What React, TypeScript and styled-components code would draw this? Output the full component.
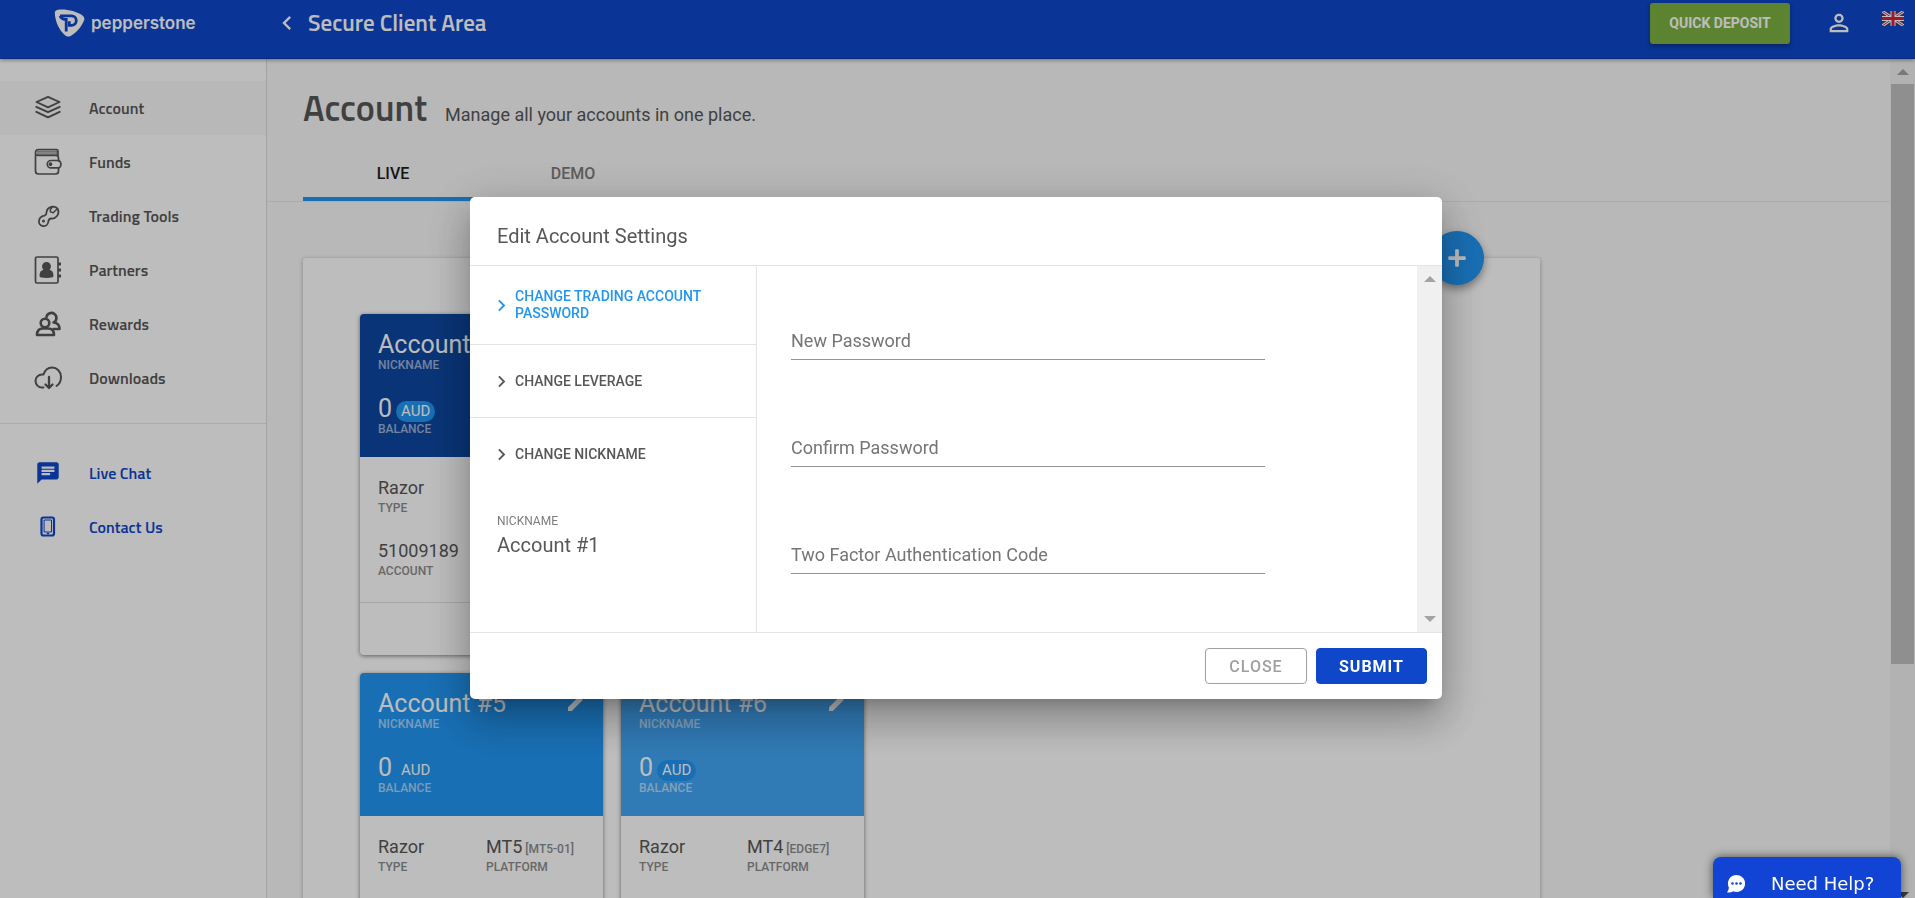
import React from "react";
import styled, { createGlobalStyle, css } from "styled-components";
import { MdChat, MdChevronLeft, MdChevronRight, MdEdit, MdPersonOutline } from "react-icons/md";
import { FaPlus } from "react-icons/fa";

const headingFont = `"Titillium Web", Roboto, sans-serif`;

const GlobalStyle = createGlobalStyle`
  *, *::before, *::after { box-sizing: border-box; }
  body { margin: 0; font-family: Roboto, sans-serif; color: #575757; background: #f8f8f8; }
  button, input { font-family: inherit; }
  button { cursor: pointer; }
  h1, h2, p, ul, dl, dd, dt { margin: 0; padding: 0; }
`;

/* Page shell */

const Shell = styled.div`
  display: flex;
  flex-direction: column;
  height: 100vh;
  overflow: hidden;
`;

const TopBar = styled.header`
  position: relative;
  z-index: 1;
  display: flex;
  align-items: center;
  flex-shrink: 0;
  height: 59px;
  padding-bottom: 12px;
  background: #0e47c9;
  border-bottom: 1px solid #0c3ba6;
  box-shadow: 0 1px 4px rgba(0, 0, 0, 0.4);
  color: #fff;
`;

const Brand = styled.a`
  display: flex;
  align-items: center;
  gap: 6px;
  flex-shrink: 0;
  width: 267px;
  padding-left: 54px;
  color: inherit;
  font: 600 17px/24px Inter, sans-serif;
  text-decoration: none;
`;

const IconButton = styled.button`
  display: flex;
  padding: 0;
  border: 0;
  background: none;
  color: inherit;
`;

const AreaTitle = styled.div`
  display: flex;
  flex: 1;
  align-items: center;
  gap: 7px;
  padding-left: 6px;
  font: 600 23px/28px ${headingFont};
`;

const TopActions = styled.div`
  display: flex;
  align-items: center;
  padding-right: 11px;
`;

const DepositButton = styled.button`
  width: 140px;
  height: 41px;
  margin-right: 35px;
  border: 0;
  border-radius: 3px;
  background: #7cb342;
  box-shadow: 0 2px 4px rgba(0, 0, 0, 0.35);
  color: #fff;
  font-size: 14px;
  font-weight: 700;
`;

const FlagButton = styled(IconButton)`
  margin-left: 29px;
  padding-bottom: 10px;
`;

const Body = styled.div`
  display: flex;
  flex: 1;
  min-height: 0;
`;

/* Side navigation */

const SideNav = styled.nav`
  flex-shrink: 0;
  width: 267px;
  padding-top: 22px;
  border-right: 1px solid #dedede;
  background: #fff;
`;

const NavList = styled.ul`
  list-style: none;

  & + & {
    margin-top: 18px;
    padding-top: 22px;
    border-top: 1px solid #e6e6e6;
  }
`;

const NavLink = styled.a<{ $active?: boolean; $accent?: boolean }>`
  display: flex;
  align-items: center;
  gap: 26px;
  height: 54px;
  padding-left: 33px;
  background: ${(p) => (p.$active ? "#f8f8f8" : "transparent")};
  color: ${(p) => (p.$accent ? "#0e47c9" : "#575757")};
  font: 600 16px/20px ${headingFont};
  text-decoration: none;

  svg {
    flex-shrink: 0;
    width: 30px;
    height: 30px;
  }
`;

/* Main content */

const Main = styled.main`
  flex: 1;
  min-width: 0;
  overflow: hidden;
`;

const PageHead = styled.div`
  display: flex;
  align-items: baseline;
  gap: 18px;
  padding: 28px 36px 0;
`;

const PageTitle = styled.h1`
  font: 600 36px/42px ${headingFont};
`;

const PageIntro = styled.p`
  font-size: 18px;
  line-height: 24px;
`;

const Tabs = styled.div`
  display: flex;
  margin-top: 17px;
  padding-left: 36px;
  border-bottom: 1px solid #e8e8e8;
`;

const Tab = styled.button<{ $active?: boolean }>`
  width: 180px;
  height: 55px;
  padding: 4px 0 0;
  border: 0;
  border-bottom: 4px solid ${(p) => (p.$active ? "#2196f3" : "transparent")};
  background: none;
  color: ${(p) => (p.$active ? "#1c1c1c" : "#7d7d7d")};
  font-size: 16px;
  font-weight: 500;
`;

const Panel = styled.section`
  position: relative;
  width: 78%;
  max-width: 1237px;
  min-height: 900px;
  margin: 56px 0 0 36px;
  padding: 56px 57px;
  border-radius: 3px;
  background: #fff;
  box-shadow: 0 1px 4px rgba(0, 0, 0, 0.3);
`;

const AddButton = styled.button`
  position: absolute;
  top: -27px;
  right: 56px;
  display: flex;
  align-items: center;
  justify-content: center;
  width: 54px;
  height: 54px;
  border: 0;
  border-radius: 50%;
  background: #2196f3;
  box-shadow: 0 4px 8px rgba(0, 0, 0, 0.4);
  color: #fff;
`;

const CardRow = styled.div`
  display: flex;
  gap: 18px;

  & + & {
    margin-top: 18px;
  }
`;

const Card = styled.article`
  width: 243px;
  border-radius: 4px;
  background: #fff;
  box-shadow: 0 1px 4px rgba(0, 0, 0, 0.5);
`;

const CardHead = styled.div<{ $color: string }>`
  display: flex;
  align-items: flex-start;
  justify-content: space-between;
  height: 143px;
  padding: 17px 14px 16px 18px;
  border-radius: 4px 4px 0 0;
  background: ${(p) => p.$color};
  color: #fff;
`;

const CardBody = styled.dl`
  display: grid;
  grid-template-columns: 108px 1fr;
  align-content: start;
  row-gap: 23px;
  height: 145px;
  padding: 19px 18px;
`;

const CardFoot = styled.div`
  height: 53px;
  border-top: 1px solid #e0e0e0;
`;

const Pair = styled.div<{ $wide?: boolean }>`
  display: flex;
  flex-direction: column-reverse;
  justify-content: flex-end;
  grid-column: ${(p) => (p.$wide ? "1 / -1" : "auto")};
`;

const HeadPair = styled(Pair)`
  & + & {
    margin-top: 23px;
  }
`;

const HeadTerm = styled.dt`
  color: rgba(255, 255, 255, 0.6);
  font-size: 12px;
  font-weight: 500;
  line-height: 14px;
`;

const HeadValue = styled.dd`
  height: 27px;
  font-size: 25px;
  line-height: 27px;
  white-space: nowrap;
`;

const BodyTerm = styled.dt`
  color: #8c8c8c;
  font-size: 12px;
  font-weight: 500;
  line-height: 16px;
`;

const BodyValue = styled.dd`
  height: 24px;
  font-size: 18px;
  line-height: 24px;
  white-space: nowrap;

  small {
    margin-left: 3px;
    color: #8c8c8c;
    font-size: 12px;
    font-weight: 500;
  }
`;

const Currency = styled.span`
  display: inline-block;
  margin-left: 4px;
  padding: 0 5px;
  border-radius: 11px;
  background: #2196f3;
  font-size: 15px;
  line-height: 21px;
  vertical-align: 1px;
`;

/* Scroll bars */

const Track = styled.div<{ $tint: string }>`
  display: flex;
  flex-direction: column;
  flex-shrink: 0;
  align-items: center;
  justify-content: space-between;
  width: 25px;
  padding: 10px 1px;
  background: ${(p) => p.$tint};
`;

const Arrow = styled.span<{ $down?: boolean; $color: string }>`
  border: 6px solid transparent;
  ${(p) =>
    p.$down
      ? css`border-top-color: ${p.$color}; border-bottom-width: 0;`
      : css`border-bottom-color: ${p.$color}; border-top-width: 0;`}
`;

const PageTrack = styled(Track)`
  padding: 10px 1px 0;
`;

const Thumb = styled.div`
  width: 100%;
  height: 70%;
  margin: 9px 0 auto;
  background: #c1c1c1;
`;

/* Dialog */

const Overlay = styled.div`
  position: fixed;
  z-index: 2;
  inset: 0;
  display: flex;
  align-items: center;
  justify-content: center;
  padding: 0 3px 2px 0;
  background: rgba(0, 0, 0, 0.26);
`;

const Dialog = styled.form`
  display: flex;
  flex-direction: column;
  width: 972px;
  max-width: 92%;
  border-radius: 5px;
  background: #fff;
  box-shadow: 0 11px 15px -7px rgba(0, 0, 0, 0.2), 0 24px 38px 3px rgba(0, 0, 0, 0.16),
    0 9px 46px 8px rgba(0, 0, 0, 0.14);
`;

const DialogTitle = styled.h2`
  padding: 24px 27px 14px;
  border-bottom: 1px solid #e4e4e4;
  font-size: 20px;
  font-weight: 400;
  line-height: 30px;
`;

const DialogBody = styled.div`
  display: flex;
  height: 366px;
`;

const Options = styled.div`
  flex-shrink: 0;
  width: 287px;
  border-right: 1px solid #e4e4e4;
`;

const Option = styled.button<{ $active?: boolean }>`
  display: flex;
  align-items: center;
  gap: 2px;
  width: 100%;
  height: ${(p) => (p.$active ? "79px" : "73px")};
  padding: 0 40px 0 20px;
  border: 0;
  border-bottom: 1px solid #e4e4e4;
  background: none;
  color: ${(p) => (p.$active ? "#2196f3" : "#575757")};
  font-size: 14px;
  font-weight: 500;
  line-height: 17px;
  text-align: left;

  &:last-of-type {
    border-bottom: 0;
  }

  svg {
    flex-shrink: 0;
  }
`;

const Summary = styled.dl`
  padding: 21px 27px;

  dt {
    color: #7d7d7d;
    font-size: 12px;
    line-height: 18px;
  }

  dd {
    font-size: 20px;
    line-height: 30px;
  }
`;

const Fields = styled.div`
  display: flex;
  flex: 1;
  flex-direction: column;
  gap: 67px;
  padding: 54px 34px 0;
`;

const FieldBox = styled.div`
  display: grid;
  width: 474px;
  max-width: 100%;
  height: 40px;
  border-bottom: 1px solid #949494;

  label {
    grid-area: 1 / 1;
    align-self: end;
    margin-bottom: 6px;
    color: #757575;
    font-size: 18px;
    line-height: 24px;
  }

  input {
    grid-area: 1 / 1;
    padding: 0;
    border: 0;
    outline: 0;
    background: none;
    font-size: 18px;
  }
`;

const DialogFoot = styled.div`
  display: flex;
  justify-content: flex-end;
  gap: 9px;
  padding: 15px;
  border-top: 1px solid #e4e4e4;
`;

const DialogButton = styled.button<{ $primary?: boolean }>`
  width: ${(p) => (p.$primary ? "111px" : "102px")};
  height: 36px;
  border: 1px solid ${(p) => (p.$primary ? "#0e47c9" : "#a0a0a0")};
  border-radius: 4px;
  background: ${(p) => (p.$primary ? "#0e47c9" : "#fff")};
  color: ${(p) => (p.$primary ? "#fff" : "#a0a0a0")};
  font-size: 16px;
  font-weight: ${(p) => (p.$primary ? 700 : 500)};
  letter-spacing: 1px;
`;

/* Support chat launcher */

const HelpButton = styled.button`
  position: fixed;
  z-index: 3;
  right: 14px;
  bottom: 0;
  display: flex;
  align-items: center;
  gap: 26px;
  width: 188px;
  height: 41px;
  padding: 12px 14px 0;
  border: 0;
  border-radius: 8px 8px 0 0;
  background: #1144d4;
  box-shadow: 0 0 10px rgba(0, 0, 0, 0.6);
  color: #fff;
  font: 18px/24px "DejaVu Sans", sans-serif;
  white-space: nowrap;
`;

/* Icons */

const ShieldLogo = () => (
  <svg width="31" height="28" viewBox="0 0 31 28" aria-hidden="true">
    <path d="M4 .8C12-.2 22 2 28.500 6.500q2.800 2 1.500 5C27 19 21 25 16 27.200q-3 1-5-1C5 21 1 12 .8 4Q.8 1.300 4 .8z" fill="#fff" />
    <path d="M6 6.800h11.500a4.800 4.800 0 0 1 0 9.600h-2.200v-4.200" fill="none" stroke="#0e47c9" strokeWidth="2.800" />
    <path d="M6 6.800q1.500 3.200 5.200 3.600h1v12.200" fill="none" stroke="#0e47c9" strokeWidth="2.800" />
  </svg>
);

const FlagIcon = () => (
  <svg width="22" height="15" viewBox="0 0 22 15" aria-hidden="true">
    <path fill="#2c3f87" d="M0 0h22v15H0z" />
    <path d="M0 0l22 15M22 0L0 15" stroke="#fff" strokeWidth="3" />
    <path d="M0 0l22 15M22 0L0 15" stroke="#d8203c" strokeWidth="1" />
    <path d="M11 0v15M0 7.500h22" stroke="#fff" strokeWidth="5" />
    <path d="M11 0v15M0 7.500h22" stroke="#d8203c" strokeWidth="3" />
  </svg>
);

const Outline = ({ children, width = 1.6 }: { children: React.ReactNode; width?: number }) => (
  <svg viewBox="0 0 30 30" fill="none" stroke="currentColor" strokeWidth={width} strokeLinecap="round" strokeLinejoin="round" aria-hidden="true">
    {children}
  </svg>
);

const LayersIcon = () => (
  <Outline width={1.900}>
    <path d="M15 3.800l11.500 5.200L15 14.300 3.500 9z" />
    <path d="M3.300 13.800L15 19.200l11.700-5.400M3.300 18.800L15 24.400l11.700-5.600" />
  </Outline>
);

const WalletIcon = () => (
  <Outline width={1.700}>
    <path d="M2.500 8V24q0 3 3 3h17q3 0 3-3v-3M25.500 14v-3q0-2.500-2.500-2.500H4.500Q2 8 2.500 5q.5-2.500 3-2.500h18q1.500 0 1.500 1.500v5" />
    <path d="M5 4h19v4H5z" fill="currentColor" fillOpacity=".45" strokeWidth=".6" />
    <path d="M26 13.500h-8a3.700 3.700 0 0 0 0 7.400h8q2-1.500 2-3.700t-2-3.700z" />
    <circle cx="17.500" cy="17.200" r="1" fill="currentColor" />
  </Outline>
);

const WrenchIcon = () => (
  <Outline width={1.800}>
    <path d="M25 8.500a6.300 6.300 0 0 0-11.500 3q0 2.500-2 3.200-5 1-5.500 5a4.600 4.600 0 0 0 9.200 1.500q.3-3.400 2.800-3.700A6.700 6.700 0 0 0 25 8.500z" />
    <path d="M24.500 7.500l-4.300 4.300-2.700-.9-.2-2.400 2.700-3" strokeWidth="1.500" />
    <circle cx="10.500" cy="20" r=".6" fill="currentColor" />
  </Outline>
);

const ContactsIcon = () => (
  <Outline width={1.700}>
    <rect x="2.500" y="2" width="22.500" height="26" rx="1.500" />
    <circle cx="13.500" cy="11.500" r="3.600" fill="currentColor" />
    <path d="M7.500 21.500q-.5-6 4-6h4q4.500 0 4 6-6 1.200-12 0z" fill="currentColor" />
    <path d="M26.500 7.500v3M26.500 13.500v3M26.500 19.500v3" strokeWidth="3" strokeLinecap="butt" />
  </Outline>
);

const RewardsIcon = () => (
  <Outline width={2.600}>
    <path d="M13.500 8a5 5 0 1 1 7 5.500q6 .5 6 6.500h-6" />
    <circle cx="12" cy="14" r="4.300" />
    <path d="M4 26q0-6.500 6-6.500h5q6 0 6 6.500z" />
  </Outline>
);

const CloudIcon = () => (
  <Outline width={2}>
    <path d="M10.500 24.500H9a6.500 6.500 0 0 1 0-13h1.500C12 7 15 4.500 19 4.500c5 0 9 4 9 9.500 0 4-1.500 7-4.500 9" />
    <path d="M16 14v11M12.500 21.500L16 25l3.500-3.500" strokeWidth="2.300" />
  </Outline>
);

const PhoneIcon = () => (
  <Outline width={2.200}>
    <rect x="8.500" y="5.500" width="12.500" height="18" rx="2" />
    <path d="M11.500 8h7v12h-7z" strokeWidth="1" />
    <path d="M14.500 21.500h1" strokeWidth="1.500" />
  </Outline>
);

const BubbleIcon = () => (
  <svg width="18" height="18" viewBox="0 0 18 18" aria-hidden="true">
    <path fill="#fff" d="M9.500 0a8.500 8.500 0 1 1-3.300 16.300Q3.500 18 0 17.300q1.800-1.300 1.900-4.800A8.500 8.500 0 0 1 9.500 0z" />
    <g fill="#1144d4">
      <circle cx="5.500" cy="8.500" r="1.300" />
      <circle cx="9.500" cy="8.500" r="1.300" />
      <circle cx="13.500" cy="8.500" r="1.300" />
    </g>
  </svg>
);

/* Data */

const navItems = [
  { label: "Account", icon: <LayersIcon />, active: true },
  { label: "Funds", icon: <WalletIcon /> },
  { label: "Trading Tools", icon: <WrenchIcon /> },
  { label: "Partners", icon: <ContactsIcon /> },
  { label: "Rewards", icon: <RewardsIcon /> },
  { label: "Downloads", icon: <CloudIcon /> },
];

const supportItems = [
  { label: "Live Chat", icon: <MdChat viewBox="-2 -2 28 28" /> },
  { label: "Contact Us", icon: <PhoneIcon /> },
];

type Account = {
  nickname: string;
  color: string;
  platform?: string;
  server?: string;
  number?: string;
};

const accountRows: Account[][] = [
  [{ nickname: "Account #1", color: "#0d47a1", number: "51009189" }],
  [
    { nickname: "Account #5", color: "#2196f3", platform: "MT5", server: "[MT5-01]" },
    { nickname: "Account #6", color: "#42a5f5", platform: "MT4", server: "[EDGE7]" },
  ],
];

const fields = [
  { id: "new-password", label: "New Password", type: "password" },
  { id: "confirm-password", label: "Confirm Password", type: "password" },
  { id: "two-factor", label: "Two Factor Authentication Code", type: "text" },
];

const AccountCard = ({ nickname, color, platform, server, number }: Account) => (
  <Card>
    <CardHead $color={color}>
      <dl>
        <HeadPair>
          <HeadTerm>NICKNAME</HeadTerm>
          <HeadValue>{nickname}</HeadValue>
        </HeadPair>
        <HeadPair>
          <HeadTerm>BALANCE</HeadTerm>
          <HeadValue>
            0<Currency>AUD</Currency>
          </HeadValue>
        </HeadPair>
      </dl>
      <IconButton type="button" aria-label={`Edit ${nickname}`}>
        <MdEdit size={24} />
      </IconButton>
    </CardHead>
    <CardBody>
      <Pair $wide={!platform}>
        <BodyTerm>TYPE</BodyTerm>
        <BodyValue>Razor</BodyValue>
      </Pair>
      {platform && (
        <Pair>
          <BodyTerm>PLATFORM</BodyTerm>
          <BodyValue>
            {platform}
            <small>{server}</small>
          </BodyValue>
        </Pair>
      )}
      {number && (
        <Pair $wide>
          <BodyTerm>ACCOUNT</BodyTerm>
          <BodyValue>{number}</BodyValue>
        </Pair>
      )}
    </CardBody>
    <CardFoot />
  </Card>
);

export default function App() {
  return (
    <>
      <GlobalStyle />
      <Shell>
        <TopBar>
          <Brand href="#">
            <ShieldLogo />
            pepperstone
          </Brand>
          <AreaTitle>
            <IconButton type="button" aria-label="Back">
              <MdChevronLeft size={28} />
            </IconButton>
            Secure Client Area
          </AreaTitle>
          <TopActions>
            <DepositButton type="button">QUICK DEPOSIT</DepositButton>
            <IconButton type="button" aria-label="Profile">
              <MdPersonOutline size={28} />
            </IconButton>
            <FlagButton type="button" aria-label="Language">
              <FlagIcon />
            </FlagButton>
          </TopActions>
        </TopBar>
        <Body>
          <SideNav>
            <NavList>
              {navItems.map((item) => (
                <li key={item.label}>
                  <NavLink href="#" $active={item.active}>
                    {item.icon}
                    {item.label}
                  </NavLink>
                </li>
              ))}
            </NavList>
            <NavList>
              {supportItems.map((item) => (
                <li key={item.label}>
                  <NavLink href="#" $accent>
                    {item.icon}
                    {item.label}
                  </NavLink>
                </li>
              ))}
            </NavList>
          </SideNav>
          <Main>
            <PageHead>
              <PageTitle>Account</PageTitle>
              <PageIntro>Manage all your accounts in one place.</PageIntro>
            </PageHead>
            <Tabs role="tablist">
              <Tab role="tab" aria-selected="true" $active>
                LIVE
              </Tab>
              <Tab role="tab" aria-selected="false">
                DEMO
              </Tab>
            </Tabs>
            <Panel>
              <AddButton type="button" aria-label="Add account">
                <FaPlus size={20} />
              </AddButton>
              {accountRows.map((row) => (
                <CardRow key={row[0].nickname}>
                  {row.map((account) => (
                    <AccountCard key={account.nickname} {...account} />
                  ))}
                </CardRow>
              ))}
            </Panel>
          </Main>
          <PageTrack $tint="#f1f1f1" aria-hidden="true">
            <Arrow $color="#a3a3a3" />
            <Thumb />
            <Arrow $down $color="#505050" />
          </PageTrack>
        </Body>
      </Shell>
      <Overlay>
        <Dialog role="dialog" aria-modal="true" aria-labelledby="dialog-title">
          <DialogTitle id="dialog-title">Edit Account Settings</DialogTitle>
          <DialogBody>
            <Options>
              <Option type="button" $active>
                <MdChevronRight size={23} />
                CHANGE TRADING ACCOUNT PASSWORD
              </Option>
              <Option type="button">
                <MdChevronRight size={23} />
                CHANGE LEVERAGE
              </Option>
              <Option type="button">
                <MdChevronRight size={23} />
                CHANGE NICKNAME
              </Option>
              <Summary>
                <dt>NICKNAME</dt>
                <dd>Account #1</dd>
              </Summary>
            </Options>
            <Fields>
              {fields.map((field) => (
                <FieldBox key={field.id}>
                  <label htmlFor={field.id}>{field.label}</label>
                  <input id={field.id} type={field.type} />
                </FieldBox>
              ))}
            </Fields>
            <Track $tint="#f0f0f0" aria-hidden="true">
              <Arrow $color="#a3a3a3" />
              <Arrow $down $color="#a3a3a3" />
            </Track>
          </DialogBody>
          <DialogFoot>
            <DialogButton type="button">CLOSE</DialogButton>
            <DialogButton type="submit" $primary>
              SUBMIT
            </DialogButton>
          </DialogFoot>
        </Dialog>
      </Overlay>
      <HelpButton type="button">
        <BubbleIcon />
        Need Help?
      </HelpButton>
    </>
  );
}
